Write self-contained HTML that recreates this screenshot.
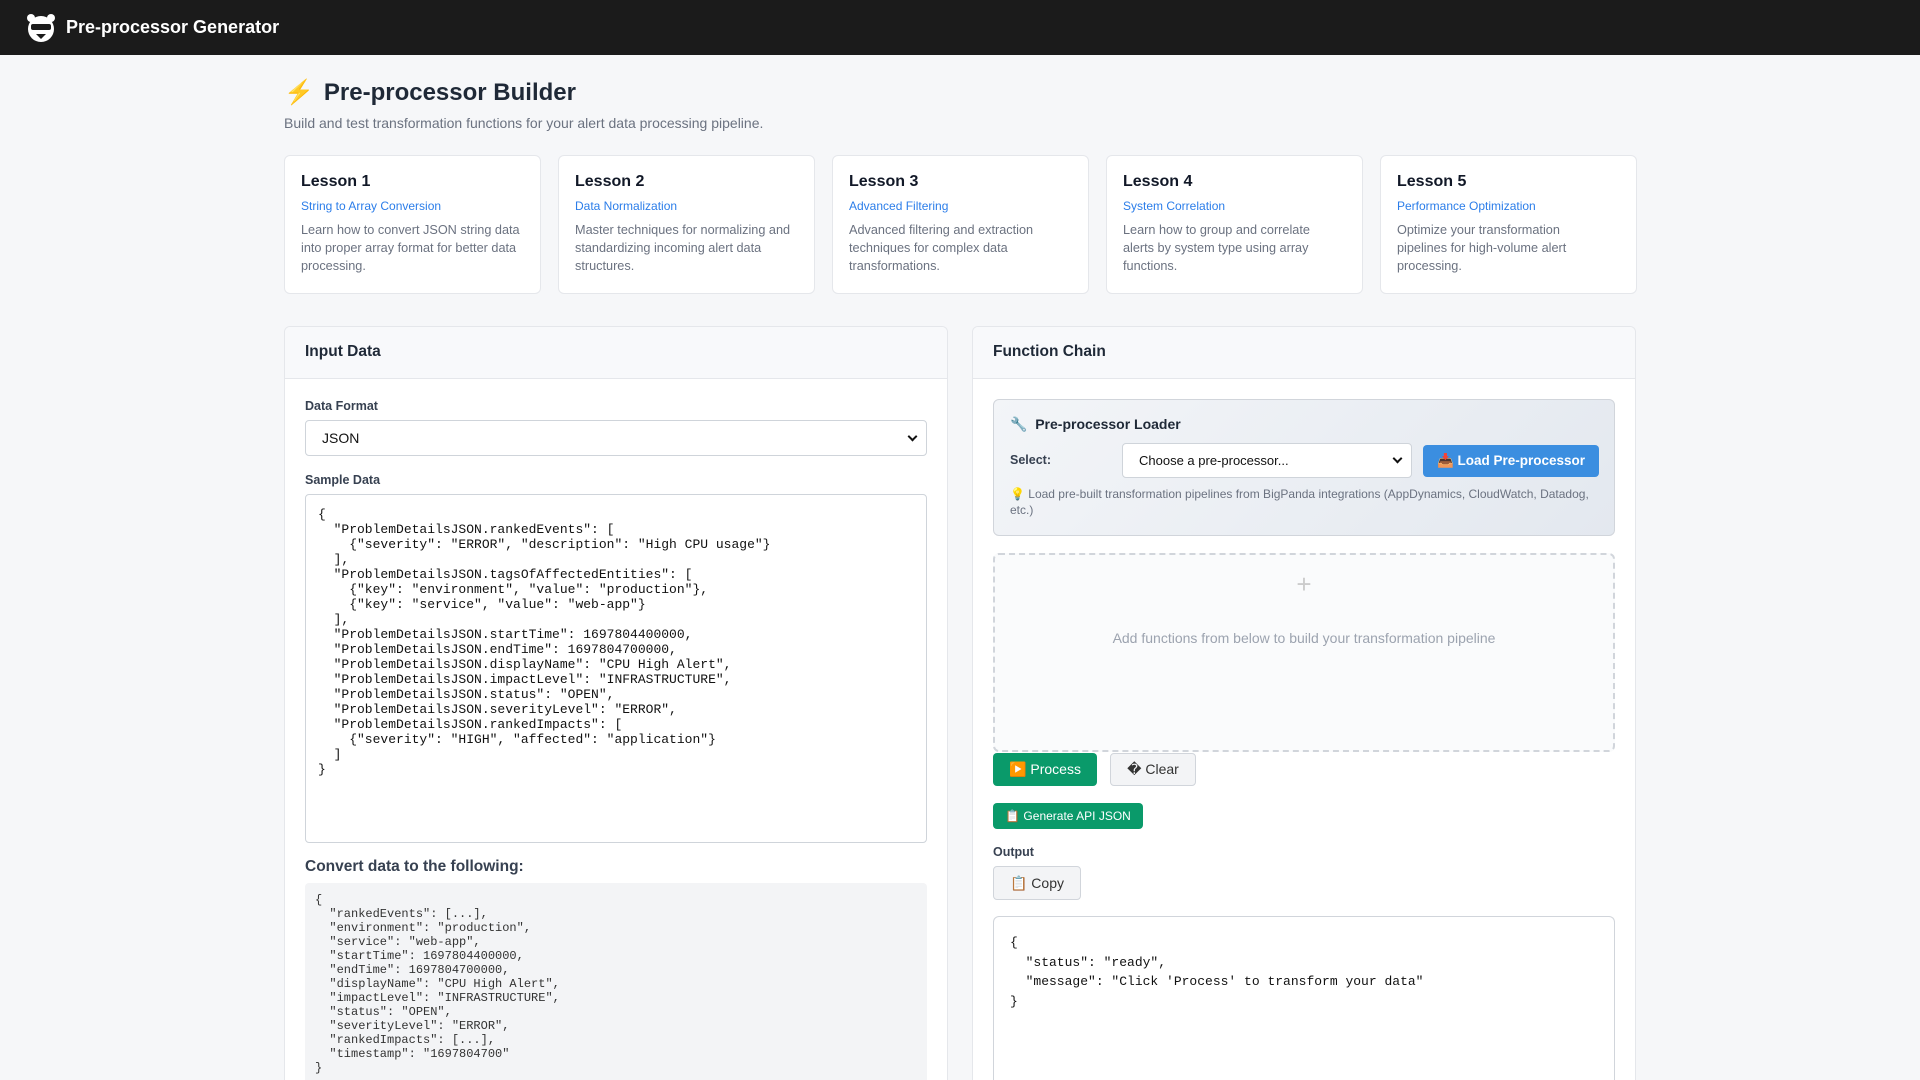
<!DOCTYPE html>
<html style="overflow:hidden;height:1080px"><head><meta charset="utf-8"><style>
*{box-sizing:border-box;margin:0;padding:0}
body{width:1920px;height:1080px;overflow:hidden;background:#f6f7f9;font-family:"Liberation Sans",sans-serif;color:#1f2937;position:relative}
.hdr{height:55px;background:#1b1b1b;display:flex;align-items:center;padding-left:24px;color:#fff;font-weight:bold;font-size:18px}
.hdr svg{margin-right:8px}
.wrap{position:absolute;left:284px;width:1352px;top:55px}
h1{position:absolute;top:23px;left:0;font-size:24px;font-weight:bold;color:#1f2937;white-space:nowrap}
h1 span{color:#f5b800;margin-right:10px}
.sub{position:absolute;top:60px;left:0;font-size:14px;color:#6b7280}
.cards{position:absolute;top:100px;left:0;display:flex;gap:17px}
.card{width:257px;height:139px;background:#fff;border:1px solid #e5e7eb;border-radius:6px;padding:16px 16px}
.card h3{font-size:16px;margin-top:1px;color:#111827}
.card .t{font-size:12px;color:#2b7de9;margin-top:8px}
.card p{font-size:12.7px;color:#6b7280;line-height:18px;margin-top:8px}
.card p.n{padding-right:14px}
.panel{position:absolute;top:326px;height:754px;background:#fff;border:1px solid #e5e7eb;border-bottom:none;border-radius:6px 6px 0 0;overflow:hidden}
.ph{height:52px;background:#f8f9fb;border-bottom:1px solid #e5e7eb;padding:16px 20px;font-size:15.5px;font-weight:bold}
.lbl{position:absolute;font-size:12.5px;font-weight:bold;color:#374151}
.sel{position:absolute;background:#fff;border:1px solid #cfd4da;border-radius:4px;font-size:14px;padding:0 10px 0 16px;display:flex;align-items:center;justify-content:space-between;color:#111}
.chev{width:7px;height:7px;border-right:2px solid #111;border-bottom:2px solid #111;transform:rotate(45deg);margin-top:-4px}
pre{font-family:"Liberation Mono",monospace}
</style></head><body>
<div class="hdr"><svg width="34" height="32" viewBox="0 0 34 32"><circle cx="17" cy="17" r="13" fill="#fff"/><circle cx="7" cy="6" r="4" fill="#fff"/><circle cx="27" cy="6" r="4" fill="#fff"/><rect x="7" y="12" width="20" height="6" rx="2" fill="#1b1b1b"/><path d="M12 22 L17 27 L22 22Z" fill="#1b1b1b"/></svg>Pre-processor Generator</div>
<div class="wrap">
<h1><span>⚡</span>Pre-processor Builder</h1>
<div class="sub">Build and test transformation functions for your alert data processing pipeline.</div>
<div class="cards">
<div class="card"><h3>Lesson 1</h3><div class="t">String to Array Conversion</div><p>Learn how to convert JSON string data into proper array format for better data processing.</p></div>
<div class="card"><h3>Lesson 2</h3><div class="t">Data Normalization</div><p>Master techniques for normalizing and standardizing incoming alert data structures.</p></div>
<div class="card"><h3>Lesson 3</h3><div class="t">Advanced Filtering</div><p>Advanced filtering and extraction techniques for complex data transformations.</p></div>
<div class="card"><h3>Lesson 4</h3><div class="t">System Correlation</div><p class="n">Learn how to group and correlate alerts by system type using array functions.</p></div>
<div class="card"><h3>Lesson 5</h3><div class="t">Performance Optimization</div><p class="n">Optimize your transformation pipelines for high-volume alert processing.</p></div>
</div>
</div>

<div class="panel" style="left:284px;width:664px">
<div class="ph">Input Data</div>
<div class="lbl" style="left:20px;top:72px">Data Format</div>
<div class="sel" style="left:20px;top:93px;width:622px;height:36px">JSON<span class="chev"></span></div>
<div class="lbl" style="left:20px;top:146px">Sample Data</div>
<div style="position:absolute;left:20px;top:167px;width:622px;height:349px;border:1px solid #cfd4da;border-radius:4px;padding:12px 12px">
<pre style="font-size:13px;line-height:15px;color:#111">{
  "ProblemDetailsJSON.rankedEvents": [
    {"severity": "ERROR", "description": "High CPU usage"}
  ],
  "ProblemDetailsJSON.tagsOfAffectedEntities": [
    {"key": "environment", "value": "production"},
    {"key": "service", "value": "web-app"}
  ],
  "ProblemDetailsJSON.startTime": 1697804400000,
  "ProblemDetailsJSON.endTime": 1697804700000,
  "ProblemDetailsJSON.displayName": "CPU High Alert",
  "ProblemDetailsJSON.impactLevel": "INFRASTRUCTURE",
  "ProblemDetailsJSON.status": "OPEN",
  "ProblemDetailsJSON.severityLevel": "ERROR",
  "ProblemDetailsJSON.rankedImpacts": [
    {"severity": "HIGH", "affected": "application"}
  ]
}</pre></div>
<div style="position:absolute;left:20px;top:531px;font-size:15.5px;font-weight:bold;color:#374151">Convert data to the following:</div>
<div style="position:absolute;left:20px;top:556px;width:622px;height:198px;background:#f3f4f6;border-radius:4px 4px 0 0;padding:10px 10px;overflow:hidden">
<pre style="font-size:12px;line-height:14px;color:#333">{
  "rankedEvents": [...],
  "environment": "production",
  "service": "web-app",
  "startTime": 1697804400000,
  "endTime": 1697804700000,
  "displayName": "CPU High Alert",
  "impactLevel": "INFRASTRUCTURE",
  "status": "OPEN",
  "severityLevel": "ERROR",
  "rankedImpacts": [...],
  "timestamp": "1697804700"
}</pre></div>
</div>

<div class="panel" style="left:972px;width:664px">
<div class="ph">Function Chain</div>
<div style="position:absolute;left:20px;top:72px;width:622px;height:137px;border:1px solid #d1d5db;border-radius:6px;background:linear-gradient(135deg,#f3f5f8,#e3e8ef)">
<div style="position:absolute;left:16px;top:16px;font-size:14px;font-weight:bold;color:#1f2937">🔧&nbsp; Pre-processor Loader</div>
<div style="position:absolute;left:16px;top:53px;font-size:12.5px;color:#374151;font-weight:bold">Select:</div>
<div class="sel" style="left:128px;top:43px;width:290px;height:35px;font-size:13px">Choose a pre-processor...<span class="chev"></span></div>
<div style="position:absolute;left:429px;top:45px;width:176px;height:32px;background:#3b8ee0;border-radius:4px;color:#fff;font-weight:bold;font-size:13.5px;display:flex;align-items:center;justify-content:center">📥 Load Pre-processor</div>
<div style="position:absolute;left:16px;top:86px;width:590px;font-size:12px;line-height:16px;color:#6b7280">💡 Load pre-built transformation pipelines from BigPanda integrations (AppDynamics, CloudWatch, Datadog, etc.)</div>
</div>
<div style="position:absolute;left:20px;top:226px;width:622px;height:199px;border:2px dashed #d1d5db;border-radius:6px;background:#fafbfc;text-align:center;color:#9ca3af">
<div style="font-size:26px;margin-top:14px;color:#ccc;font-weight:lighter">+</div>
<div style="font-size:14px;margin-top:30px">Add functions from below to build your transformation pipeline</div>
</div>
<div style="position:absolute;left:20px;top:426px;width:104px;height:33px;background:#0a9a6a;border-radius:4px;color:#fff;font-size:14px;display:flex;align-items:center;justify-content:center">▶️ Process</div>
<div style="position:absolute;left:137px;top:426px;width:86px;height:33px;background:#f3f4f6;border:1px solid #d1d5db;border-radius:4px;color:#333;font-size:14px;display:flex;align-items:center;justify-content:center">� Clear</div>
<div style="position:absolute;left:20px;top:476px;width:150px;height:26px;background:#0a9a6a;border-radius:4px;color:#fff;font-size:12px;display:flex;align-items:center;justify-content:center">📋 Generate API JSON</div>
<div class="lbl" style="left:20px;top:518px">Output</div>
<div style="position:absolute;left:20px;top:539px;width:88px;height:34px;background:#f3f4f6;border:1px solid #d1d5db;border-radius:4px;color:#333;font-size:14px;display:flex;align-items:center;justify-content:center">📋 Copy</div>
<div style="position:absolute;left:20px;top:589px;width:622px;height:165px;border:1px solid #d1d5db;border-bottom:none;border-radius:6px 6px 0 0;padding:16px 16px">
<pre style="font-size:13px;line-height:19.5px;color:#111">{
  "status": "ready",
  "message": "Click 'Process' to transform your data"
}</pre></div>
</div>
</body></html>
